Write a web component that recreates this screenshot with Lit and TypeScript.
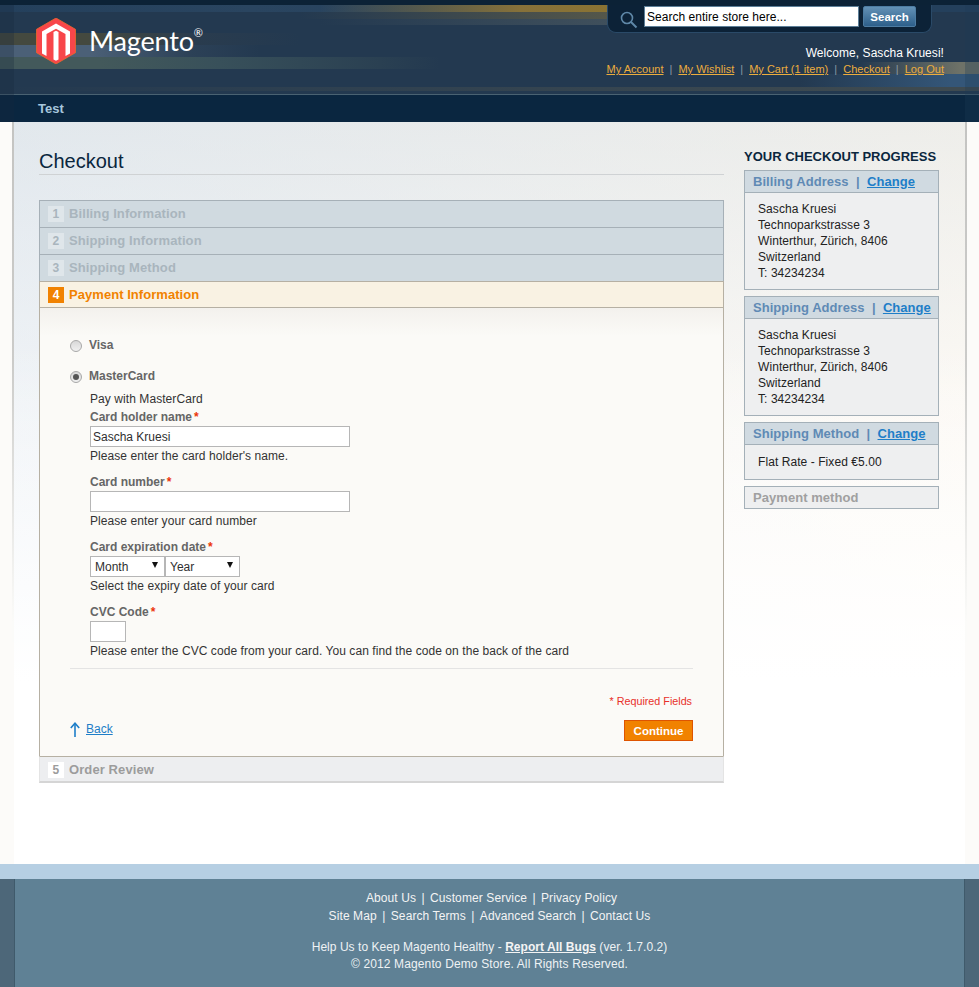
import { LitElement, html, css } from "lit";
import { customElement } from "lit/decorators.js";

const address = ["Sascha Kruesi", "Technoparkstrasse 3", "Winterthur, Zürich, 8406", "Switzerland", "T: 34234234"];
const doneSteps = [
  ["1", "Billing Information"],
  ["2", "Shipping Information"],
  ["3", "Shipping Method"],
];
const topLinks = ["My Account", "My Wishlist", "My Cart (1 item)", "Checkout", "Log Out"];

@customElement("app-root")
export class AppRoot extends LitElement {
  static styles = css`
    :host {
      display: block;
      font-family: "Liberation Sans", Arial, sans-serif;
      font-size: 12px;
      line-height: 16px;
      color: #222;
      background: #fcfbf9;
      width: 979px;
      height: 987px;
      overflow: hidden;
    }
    * { box-sizing: border-box; }
    a { color: inherit; }

    /* header */
    .header {
      position: relative;
      height: 122px;
      background-color: #233950;
      background-image:
        linear-gradient(#0c2236, #0c2236),
        linear-gradient(90deg, transparent 0, transparent 320px, #86713a 520px, #8a7333 610px),
        linear-gradient(90deg, transparent 0, transparent 300px, #55574a 610px),
        linear-gradient(90deg, transparent 0, transparent 320px, #40505c 610px),
        linear-gradient(90deg, #24405c, #2a4560 250px, #24405c 600px),
        linear-gradient(90deg, #44493f 0, #44493f 90px, #2a3c4e 190px, transparent 300px),
        linear-gradient(90deg, #4b6077 0, #4b6077 90px, #2c4157 190px, transparent 260px),
        linear-gradient(90deg, #43595b 0, #43595b 100px, #38505a 220px, #2a4052 380px, transparent 440px),
        linear-gradient(90deg, transparent 0, #2e4050 300px, #3e4a50 900px),
        linear-gradient(90deg, transparent 0, transparent 860px, #6e7268 960px),
        linear-gradient(90deg, transparent 0, transparent 800px, #345678 950px);
      background-repeat: no-repeat;
      background-size: 100% 5px, 610px 7px, 610px 7px, 610px 6px, 100% 7px, 100% 12px, 100% 12px, 100% 12px, 100% 4px, 100% 12px, 100% 13px;
      background-position: 0 0, 0 5px, 0 12px, 0 19px, 0 5px, 0 33px, 0 45px, 0 57px, 0 87px, 0 62px, 0 74px;
      overflow: hidden;
    }
    .header::before, .header::after {
      content: "";
      position: absolute;
      top: 5px;
      width: 14px;
      height: 117px;
      background: rgba(20, 40, 60, 0.28);
    }
    .header::before { left: 0; }
    .header::after { right: 0; background: rgba(30, 60, 85, 0.3); }
    .brand-row {
      height: 94px;
      display: flex;
      justify-content: space-between;
      padding: 5px 35px 0 36px;
    }
    .logo { display: flex; align-items: flex-start; padding-top: 13px; gap: 13px; }
    .logo svg { display: block; }
    .wordmark {
      font-family: Lato, "Open Sans", sans-serif;
      font-size: 27px;
      letter-spacing: -0.15px;
      line-height: 46px;
      color: #fff;
      position: relative;
    }
    .wordmark sup {
      font-size: 11px;
      line-height: 12px;
      position: absolute;
      top: 9px;
      right: -9px;
      letter-spacing: 0;
    }
    .account { display: flex; flex-direction: column; align-items: flex-end; }
    .search {
      width: 325px;
      height: 28px;
      margin-right: 12px;
      background: #0c2237;
      border: 1px solid #2a4a68;
      border-top: 0;
      border-radius: 0 0 9px 9px;
      display: flex;
      align-items: flex-start;
      padding: 1px 0 0 12px;
    }
    .search svg { margin: 5px 6px 0 0; flex: none; }
    .search input {
      width: 215px;
      height: 21px;
      border: 1px solid #5d7f98;
      background: #fff;
      font: 12px "Liberation Sans", Arial, sans-serif;
      letter-spacing: 0.03px;
      color: #000;
      padding: 0 2px;
      outline: 0;
    }
    .search input::placeholder { color: #000; opacity: 1; }
    .search button {
      margin-left: 4px;
      width: 53px;
      height: 21px;
      border: 1px solid #4d7ca2;
      border-radius: 2px;
      background: linear-gradient(#6391b6, #2d5f8a);
      color: #fff;
      font: bold 11.5px "Liberation Sans", Arial, sans-serif;
      padding: 0;
    }
    .welcome { color: #fff; font-size: 12px; letter-spacing: 0.05px; line-height: 16px; margin-top: 12px; }
    .toplinks { display: flex; font-size: 11px; letter-spacing: 0.02px; line-height: 16px; color: #ecad3e; margin-top: 0; }
    .toplinks span { color: #8a98a4; padding: 0 6px; }

    .nav {
      height: 28px;
      background: #0a2640;
      border-top: 1px solid #4a6272;
      padding: 6px 0 0 38px;
      color: #a7c6dd;
      font-weight: bold;
      font-size: 13px;
    }

    /* main */
    .main {
      position: relative;
      margin: 0 14px;
      height: 742px;
      padding: 26px 26px 0 25px;
      display: flex;
      gap: 20px;
      background:
        linear-gradient(rgba(255, 255, 255, 0) 220px, #fff 560px),
        linear-gradient(90deg, rgba(224, 233, 242, 0.4), rgba(255, 248, 236, 0.4)),
        linear-gradient(#e3e7e9 0, #ebeef0 110px, #f9f9f9 280px, #fff 560px);
    }
    .main::before, .main::after {
      content: "";
      position: absolute;
      top: 0;
      width: 2px;
      height: 520px;
      background: linear-gradient(#c4c4c2, #cbcbc9 240px, #fbfbf9 500px);
    }
    .main::before { left: -2px; }
    .main::after { right: -2px; }
    .col { width: 685px; flex: none; }
    h1 {
      margin: 0 0 25px;
      height: 27px;
      border-bottom: 1px solid #cfd2d4;
      font-size: 20px;
      line-height: 26px;
      font-weight: normal;
      color: #0a263d;
    }
    .step {
      height: 27px;
      border: 1px solid #a6b0b7;
      border-bottom: 0;
      background: #d0dae0;
      display: flex;
      align-items: center;
      padding-left: 8px;
      color: #a9b5bd;
      font-weight: bold;
      font-size: 13px;
      letter-spacing: 0.1px;
    }
    .num {
      width: 16px;
      height: 16px;
      margin-right: 5px;
      background: #dfe6ea;
      text-align: center;
      font-size: 12px;
      line-height: 16px;
    }
    .step.active {
      height: 26px;
      background: #f9f2e3;
      border-color: #b6b0a3;
      color: #f18200;
      letter-spacing: 0.05px;
    }
    .step.active .num { background: #f18200; color: #fff; }
    .step.last {
      height: 27px;
      background: #edeef0;
      border: 0;
      border-top: 1px solid #b6b0a3;
      border-bottom: 2px solid #d5d5d5;
      border-left: 1px solid #e4e4e4;
      border-right: 1px solid #e4e4e4;
      padding-top: 1px;
      color: #9c9c9c;
    }
    .step.last .num { background: #fff; }
    .content {
      height: 449px;
      border: 1px solid #b6b0a3;
      border-bottom: 0;
      background: linear-gradient(#f3f1ed 0, #fbfaf7 28px);
      padding: 27px 30px 0;
    }
    .method {
      display: flex;
      align-items: center;
      height: 21px;
      color: #666;
      font-weight: bold;
      font-size: 12px;
      gap: 7px;
      margin-bottom: 10px;
    }
    .radio {
      width: 12px;
      height: 12px;
      border-radius: 50%;
      border: 1px solid #a8a8a8;
      background: linear-gradient(#d8d8d8, #f0f0f0);
      margin-top: 1px;
      display: flex;
      align-items: center;
      justify-content: center;
      flex: none;
    }
    .radio.on::after {
      content: "";
      width: 6px;
      height: 6px;
      border-radius: 50%;
      background: #555;
    }
    .method.selected { margin-bottom: 4px; }
    .method.selected span { margin-top: -1px; }
    .method:not(.selected) span { margin-top: -2px; }
    .form { padding-left: 20px; font-size: 12px; letter-spacing: 0.07px; color: #333; }
    .intro { margin-bottom: 2px; }
    .field { margin-bottom: 10px; }
    .field:last-child { margin-bottom: 0; }
    label {
      display: block;
      height: 16px;
      margin-bottom: 1px;
      color: #666;
      font-weight: bold;
      font-size: 12px;
      letter-spacing: 0;
    }
    label i { color: #eb340a; font-style: normal; margin-left: 2px; }
    .text {
      display: block;
      height: 21px;
      border: 1px solid #b6b6b6;
      background: #fff;
      padding: 0 2px;
      font: 12px "Liberation Sans", Arial, sans-serif;
      color: #2f2f2f;
      outline: 0;
      margin-bottom: 1px;
    }
    .wide { width: 260px; }
    .short { width: 36px; }
    .selects { display: flex; margin-bottom: 1px; }
    .select { position: relative; width: 75px; height: 21px; }
    .select select {
      appearance: none;
      width: 100%;
      height: 100%;
      border: 1px solid #b6b6b6;
      background: #fff;
      font: 12px "Liberation Sans", Arial, sans-serif;
      color: #2f2f2f;
      padding: 0 0 0 4px;
      border-radius: 0;
      outline: 0;
    }
    .select::after {
      content: "";
      position: absolute;
      right: 7px;
      top: 6px;
      border-left: 3.5px solid transparent;
      border-right: 3.5px solid transparent;
      border-top: 6px solid #111;
      pointer-events: none;
    }
    .rule { height: 1px; background: #e4e4e4; margin: 9px 0 24px; }
    .required { text-align: right; color: #e8302a; font-size: 10.75px; padding-right: 1px; margin-bottom: 11px; }
    .actions { display: flex; justify-content: space-between; align-items: flex-start; }
    .back { display: flex; align-items: center; gap: 6px; color: #1e7ec8; font-size: 12px; margin-top: 1px; }
    .back svg { display: block; }
    .continue {
      width: 69px;
      height: 21px;
      border: 1px solid #de5400;
      background: #f18200;
      color: #fff;
      font: bold 11.5px "Liberation Sans", Arial, sans-serif;
      padding: 0;
    }

    /* sidebar */
    .side { width: 195px; flex: none; }
    .side h2 {
      margin: 1px 0 5px;
      font-size: 13px;
      line-height: 16px;
      font-weight: bold;
      color: #0a263d;
      white-space: nowrap;
    }
    .block { border: 1px solid #a4b0b8; background: #eeeff0; margin-bottom: 6px; }
    .block header {
      height: 22px;
      background: #d0dae1;
      border-bottom: 1px solid #a4b0b8;
      padding-left: 8px;
      font-weight: bold;
      font-size: 13px;
      letter-spacing: 0.05px;
      line-height: 22px;
      color: #5f8ab5;
      white-space: pre;
    }
    .block header a { color: #1e7ec8; }
    .block .body { padding: 8px 13px; color: #222; font-size: 12px; letter-spacing: 0.07px; }
    .block .body.one { padding: 9px 13px; }
    .block.todo header { height: 21px; background: #eeeff0; border: 0; color: #a0a0a0; }

    /* footer */
    .band { height: 15px; background: #b6cfe3; }
    .footer {
      position: relative;
      height: 108px;
      background: #5f8195;
      padding-top: 10px;
      color: #f4f4f4;
      text-align: center;
      font-size: 12px;
      line-height: 18px;
    }
    .footer::before, .footer::after {
      content: "";
      position: absolute;
      top: 0;
      bottom: 0;
      width: 14px;
      background: #4d6779;
    }
    .footer::before { left: 0; border-right: 1px solid #3f5a6b; }
    .footer::after { right: 0; border-left: 1px solid #3f5a6b; }
    .footer nav { letter-spacing: 0.1px; }
    .footer nav:first-child { padding-left: 4px; }
    .footer nav span { padding: 0 5.4px; }
    .footer .legal { margin-top: 14px; line-height: 17px; color: #eef2f4; }
    .footer .legal div:first-child { letter-spacing: 0.04px; }
    .footer .legal div:last-child { letter-spacing: 0.13px; }
    .footer .legal a { font-weight: bold; color: #f4f4f4; }
  `;

  private sidebarBlock(title: string, lines: string[]) {
    return html`<section class="block">
      <header>${title}  |  <a href="#">Change</a></header>
      <div class="body ${lines.length === 1 ? "one" : ""}">${lines.map((l) => html`<div>${l}</div>`)}</div>
    </section>`;
  }

  private logo() {
    return html`<svg width="40" height="46" viewBox="0 0 40 46" aria-hidden="true">
      <path d="M20 0 L39.500 11.300 L39.500 34.700 L20 46 L0.500 34.700 L0.500 11.300 Z" fill="#f8464a" stroke="#ea6a2a" stroke-width="0.800"/>
      <path fill="#fff" d="M20 5.500 L34 13.500 L34 35.500 L29.500 38 L29.500 16 L20 10.800 L10.500 16 L10.500 38 L6 35.500 L6 13.500 Z"/>
      <path fill="#fff" d="M17.500 14 L20 12.700 L22.500 14 L22.500 41.500 L20 42.800 L17.500 41.500 Z"/>
    </svg>`;
  }

  render() {
    return html`
      <div class="header">
        <div class="brand-row">
          <div class="logo">
            ${this.logo()}
            <div class="wordmark">Magento<sup>®</sup></div>
          </div>
          <div class="account">
            <div class="search">
              <svg width="18" height="18" viewBox="0 0 18 18" fill="none" stroke="#5f88a8" aria-hidden="true">
                <circle cx="7" cy="7" r="5.500" stroke-width="1.600"/>
                <path d="M11 11 L16.500 16.500" stroke-width="2"/>
              </svg>
              <input placeholder="Search entire store here..." />
              <button>Search</button>
            </div>
            <div class="welcome">Welcome, Sascha Kruesi!</div>
            <div class="toplinks">
              ${topLinks.map((l, i) => html`${i ? html`<span>|</span>` : ""}<a href="#">${l}</a>`)}
            </div>
          </div>
        </div>
        <div class="nav">Test</div>
      </div>

      <div class="main">
        <div class="col">
          <h1>Checkout</h1>
          ${doneSteps.map(([n, t]) => html`<div class="step"><div class="num">${n}</div>${t}</div>`)}
          <div class="step active"><div class="num">4</div>Payment Information</div>
          <div class="content">
            <div class="method"><div class="radio"></div><span>Visa</span></div>
            <div class="method selected"><div class="radio on"></div><span>MasterCard</span></div>
            <div class="form">
              <div class="intro">Pay with MasterCard</div>
              <div class="field">
                <label>Card holder name<i>*</i></label>
                <input class="text wide" .value=${"Sascha Kruesi"} />
                <div>Please enter the card holder's name.</div>
              </div>
              <div class="field">
                <label>Card number<i>*</i></label>
                <input class="text wide" />
                <div>Please enter your card number</div>
              </div>
              <div class="field">
                <label>Card expiration date<i>*</i></label>
                <div class="selects">
                  <div class="select"><select><option>Month</option></select></div>
                  <div class="select"><select><option>Year</option></select></div>
                </div>
                <div>Select the expiry date of your card</div>
              </div>
              <div class="field">
                <label>CVC Code<i>*</i></label>
                <input class="text short" />
                <div>Please enter the CVC code from your card. You can find the code on the back of the card</div>
              </div>
            </div>
            <div class="rule"></div>
            <div class="required">* Required Fields</div>
            <div class="actions">
              <div class="back">
                <svg width="10" height="15" viewBox="0 0 10 15" fill="none" stroke="#1e7ec8" stroke-width="1.600" aria-hidden="true">
                  <path d="M5 15 L5 1.500"/><path d="M0.800 6 L5 1.200 L9.200 6"/>
                </svg>
                <a href="#">Back</a>
              </div>
              <button class="continue">Continue</button>
            </div>
          </div>
          <div class="step last"><div class="num">5</div>Order Review</div>
        </div>

        <aside class="side">
          <h2>YOUR CHECKOUT PROGRESS</h2>
          ${this.sidebarBlock("Billing Address", address)}
          ${this.sidebarBlock("Shipping Address", address)}
          ${this.sidebarBlock("Shipping Method", ["Flat Rate - Fixed €5.00"])}
          <section class="block todo"><header>Payment method</header></section>
        </aside>
      </div>

      <div class="band"></div>
      <div class="footer">
        <nav>About Us<span>|</span>Customer Service<span>|</span>Privacy Policy</nav>
        <nav>Site Map<span>|</span>Search Terms<span>|</span>Advanced Search<span>|</span>Contact Us</nav>
        <div class="legal">
          <div>Help Us to Keep Magento Healthy - <a href="#">Report All Bugs</a> (ver. 1.7.0.2)</div>
          <div>© 2012 Magento Demo Store. All Rights Reserved.</div>
        </div>
      </div>
    `;
  }
}
